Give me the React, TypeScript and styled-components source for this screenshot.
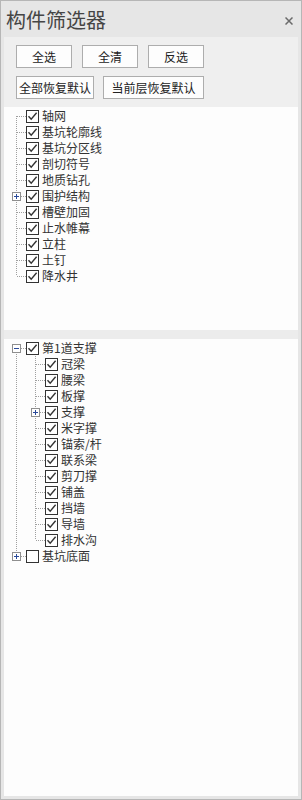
import React from "react";
import styled, { createGlobalStyle } from "styled-components";

const Global = createGlobalStyle`
  html, body { margin: 0; padding: 0; background: #e5e5e5; }
  * { box-sizing: border-box; }
`;

const FONT = `"Noto Sans CJK SC", "Microsoft YaHei", sans-serif`;

const Frame = styled.div`
  width: 302px;
  height: 800px;
  border: 1px solid #b6b6b6;
  background: #e6e6e6;
  display: flex;
  flex-direction: column;
  font-family: ${FONT};
`;

const TitleBar = styled.div`
  height: 36px;
  display: flex;
  align-items: center;
  justify-content: space-between;
  padding: 0 8px 0 5px;
`;

const Title = styled.div`
  font-size: 20px;
  line-height: 24px;
  color: #454545;
  margin-top: 1px;
`;

const Close = styled.button`
  border: none;
  background: transparent;
  padding: 0;
  width: 8px;
  height: 8px;
  display: flex;
  margin-top: 3px;
`;

const Body = styled.div`
  flex: 1;
  margin: 0 3px 3px 3px;
  background: #ececec;
  display: flex;
  flex-direction: column;
  min-height: 0;
`;

const Toolbar = styled.div`
  background: #efefef;
  padding: 8px 0 8px 12px;
  display: flex;
  flex-direction: column;
  gap: 8px;
`;

const BtnRow = styled.div<{ $gap: number }>`
  display: flex;
  gap: ${(p) => p.$gap}px;
`;

const Btn = styled.button<{ $w: number }>`
  width: ${(p) => p.$w}px;
  height: 23px;
  border: 1px solid #adadad;
  background: #fdfdfd;
  color: #222;
  font-family: ${FONT};
  font-size: 12px;
  line-height: 21px;
  padding: 0;
  white-space: nowrap;
`;

const Panel = styled.div<{ $h?: number }>`
  background: #fdfdfd;
  padding-top: 1px;
  padding-left: 3px;
  ${(p) => (p.$h ? `height: ${p.$h}px;` : "flex: 1;")}
  flex-shrink: 0;
`;

const Gap = styled.div`
  height: 9px;
  background: #ececec;
  flex-shrink: 0;
`;

const Row = styled.div`
  height: 16px;
  display: flex;
  align-items: center;
`;

const Cell = styled.span<{ $up: boolean; $down: boolean; $h: boolean }>`
  position: relative;
  width: 19px;
  height: 16px;
  flex-shrink: 0;
  &::before {
    content: "";
    display: ${(p) => (p.$up || p.$down ? "block" : "none")};
    position: absolute;
    left: 9px;
    width: 1px;
    top: ${(p) => (p.$up ? 0 : 8)}px;
    bottom: ${(p) => (p.$down ? 0 : 8)}px;
    background-image: linear-gradient(to bottom, #a0a0a0 50%, transparent 50%);
    background-size: 1px 2px;
  }
  &::after {
    content: "";
    display: ${(p) => (p.$h ? "block" : "none")};
    position: absolute;
    left: 10px;
    right: 0;
    top: 8px;
    height: 1px;
    background-image: linear-gradient(to right, #a0a0a0 50%, transparent 50%);
    background-size: 2px 1px;
  }
`;

const Expander = styled.span`
  position: absolute;
  left: 5px;
  top: 4px;
  width: 9px;
  height: 9px;
  border: 1px solid #8f8f8f;
  background: #fff;
  z-index: 1;
  display: flex;
`;

const Check = styled.span`
  width: 13px;
  height: 13px;
  border: 1px solid #333;
  background: #fff;
  flex-shrink: 0;
  display: flex;
`;

const Label = styled.span`
  margin-left: 3px;
  font-size: 12px;
  line-height: 16px;
  color: #333;
  white-space: nowrap;
`;

type Node = {
  label: string;
  checked: boolean;
  expandable?: boolean;
  expanded?: boolean;
  children?: Node[];
};

const tree1: Node[] = [
  { label: "轴网", checked: true },
  { label: "基坑轮廓线", checked: true },
  { label: "基坑分区线", checked: true },
  { label: "剖切符号", checked: true },
  { label: "地质钻孔", checked: true },
  { label: "围护结构", checked: true, expandable: true },
  { label: "槽壁加固", checked: true },
  { label: "止水帷幕", checked: true },
  { label: "立柱", checked: true },
  { label: "土钉", checked: true },
  { label: "降水井", checked: true },
];

const tree2: Node[] = [
  {
    label: "第1道支撑",
    checked: true,
    expandable: true,
    expanded: true,
    children: [
      { label: "冠梁", checked: true },
      { label: "腰梁", checked: true },
      { label: "板撑", checked: true },
      { label: "支撑", checked: true, expandable: true },
      { label: "米字撑", checked: true },
      { label: "锚索/杆", checked: true },
      { label: "联系梁", checked: true },
      { label: "剪刀撑", checked: true },
      { label: "铺盖", checked: true },
      { label: "挡墙", checked: true },
      { label: "导墙", checked: true },
      { label: "排水沟", checked: true },
    ],
  },
  { label: "基坑底面", checked: false, expandable: true },
];

const CheckMark = () => (
  <svg width="11" height="11" viewBox="0 0 11 11">
    <path d="M1.5 5.2 L4.2 8.2 L9.6 1.8" fill="none" stroke="#333" strokeWidth="1.4" />
  </svg>
);

const Sign = ({ open }: { open: boolean }) => (
  <svg width="7" height="7" viewBox="0 0 7 7">
    <rect x="1" y="3" width="5" height="1" fill="#2a4a9a" />
    {!open && <rect x="3" y="1" width="1" height="5" fill="#2a4a9a" />}
  </svg>
);

type Flat = {
  node: Node;
  level: number;
  ancestorsHasNext: boolean[];
  hasPrev: boolean;
  hasNext: boolean;
};

function flatten(nodes: Node[], level = 0, anc: boolean[] = [], out: Flat[] = []): Flat[] {
  nodes.forEach((n, i) => {
    const hasPrev = i > 0 || level > 0;
    const hasNext = i < nodes.length - 1;
    out.push({ node: n, level, ancestorsHasNext: anc, hasPrev, hasNext });
    if (n.children && n.expanded) flatten(n.children, level + 1, [...anc, hasNext], out);
  });
  return out;
}

const Tree = ({ nodes }: { nodes: Node[] }) => (
  <>
    {flatten(nodes).map((f, idx) => (
      <Row key={idx}>
        {f.ancestorsHasNext.map((a, i) => (
          <Cell key={i} $up={a} $down={a} $h={false} />
        ))}
        <Cell $up={f.hasPrev} $down={f.hasNext} $h>
          {f.node.expandable && (
            <Expander>
              <Sign open={!!f.node.expanded} />
            </Expander>
          )}
        </Cell>
        <Check>{f.node.checked && <CheckMark />}</Check>
        <Label>{f.node.label}</Label>
      </Row>
    ))}
  </>
);

export default function App() {
  return (
    <>
      <Global />
      <Frame>
        <TitleBar>
          <Title>构件筛选器</Title>
          <Close aria-label="关闭">
            <svg width="8" height="8" viewBox="0 0 8 8">
              <path d="M0.5 0.5 L7.5 7.5 M7.5 0.5 L0.5 7.5" stroke="#6a6a6a" strokeWidth="1.5" />
            </svg>
          </Close>
        </TitleBar>
        <Body>
          <Toolbar>
            <BtnRow $gap={10}>
              <Btn $w={56}>全选</Btn>
              <Btn $w={56}>全清</Btn>
              <Btn $w={56}>反选</Btn>
            </BtnRow>
            <BtnRow $gap={9}>
              <Btn $w={78}>全部恢复默认</Btn>
              <Btn $w={101}>当前层恢复默认</Btn>
            </BtnRow>
          </Toolbar>
          <Panel $h={223}>
            <Tree nodes={tree1} />
          </Panel>
          <Gap />
          <Panel>
            <Tree nodes={tree2} />
          </Panel>
        </Body>
      </Frame>
    </>
  );
}
